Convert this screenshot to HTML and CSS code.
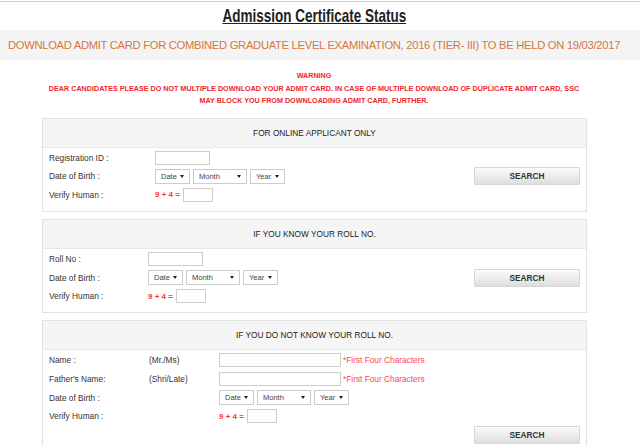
FILE: index.html
```html
<!DOCTYPE html>
<html lang="en">
<head>
    <meta charset="UTF-8">
    <meta name="viewport" content="width=device-width, initial-scale=1.0">
    <title>Admission Certificate Status</title>
    <link rel="stylesheet" href="styles.css">
</head>
<body>
    <div class="topline"></div>
    <div class="page">
        <h1 class="title"><span>Admission Certificate Status</span></h1>
    </div>

    <div class="banner">
        <p>DOWNLOAD ADMIT CARD FOR COMBINED GRADUATE LEVEL EXAMINATION, 2016 (TIER- III) TO BE HELD ON 19/03/2017</p>
    </div>

    <div class="page">
        <div class="warning">
            WARNING<br>
            DEAR CANDIDATES PLEASE DO NOT MULTIPLE DOWNLOAD YOUR ADMIT CARD. IN CASE OF MULTIPLE DOWNLOAD OF DUPLICATE ADMIT CARD, SSC<br>
            MAY BLOCK YOU FROM DOWNLOADING ADMIT CARD, FURTHER.
        </div>

        <!-- online applicant -->
        <div class="panel">
            <div class="panel-head">FOR ONLINE APPLICANT ONLY</div>
            <form class="panel-body form-online">
                <label>Registration ID :</label>
                <div class="field"><input type="text" class="txt reg"></div>
                <label>Date of Birth :</label>
                <div class="field">
                    <select class="sel date"><option>Date</option></select>
                    <select class="sel month"><option>Month</option></select>
                    <select class="sel year"><option>Year</option></select>
                </div>
                <label>Verify Human :</label>
                <div class="field"><span class="captcha">9 + 4 =</span><input type="text" class="txt verify"></div>
                <button type="button" class="search">SEARCH</button>
            </form>
        </div>

        <!-- roll no known -->
        <div class="panel">
            <div class="panel-head">IF YOU KNOW YOUR ROLL NO.</div>
            <form class="panel-body form-roll">
                <label>Roll No :</label>
                <div class="field"><input type="text" class="txt reg"></div>
                <label>Date of Birth :</label>
                <div class="field">
                    <select class="sel date"><option>Date</option></select>
                    <select class="sel month"><option>Month</option></select>
                    <select class="sel year"><option>Year</option></select>
                </div>
                <label>Verify Human :</label>
                <div class="field"><span class="captcha">9 + 4 =</span><input type="text" class="txt verify"></div>
                <button type="button" class="search">SEARCH</button>
            </form>
        </div>

        <!-- roll no unknown -->
        <div class="panel">
            <div class="panel-head">IF YOU DO NOT KNOW YOUR ROLL NO.</div>
            <form class="panel-body form-name">
                <label>Name :</label>
                <span class="prefix">(Mr./Ms)</span>
                <div class="field"><input type="text" class="txt name"><span class="hint">*First Four Characters</span></div>
                <label>Father's Name:</label>
                <span class="prefix">(Shri/Late)</span>
                <div class="field"><input type="text" class="txt name"><span class="hint">*First Four Characters</span></div>
                <label>Date of Birth :</label>
                <span></span>
                <div class="field">
                    <select class="sel date"><option>Date</option></select>
                    <select class="sel month"><option>Month</option></select>
                    <select class="sel year"><option>Year</option></select>
                </div>
                <label>Verify Human :</label>
                <span></span>
                <div class="field"><span class="captcha">9 + 4 =</span><input type="text" class="txt verify"></div>
                <button type="button" class="search">SEARCH</button>
            </form>
        </div>
    </div>
</body>
</html>
```

FILE: styles.css
```css
body {
    margin: 0;
    font-family: "Liberation Sans", Arial, sans-serif;
    color: #333;
    background: #fff;
}
.topline {
    height: 1px;
    margin-top: 1px;
    background: #ccc;
}
.page {
    width: 628px;
}
.title {
    margin: 0;
    padding-top: 3px;
    height: 25px;
    text-align: center;
    font-size: 19px;
    line-height: 22px;
    font-weight: bold;
    color: #222;
}
.title span {
    display: inline-block;
    text-decoration: underline;
    text-decoration-thickness: 1px;
    transform: scaleX(0.71);
}
.banner {
    background: #f4f4f4;
    height: 30px;
}
.banner p {
    margin: 0;
    width: 628px;
    text-align: center;
    white-space: nowrap;
    line-height: 30px;
    font-size: 11.2px;
    letter-spacing: -0.28px;
    color: #d4773e;
}
.warning {
    padding: 10px 0 10px;
    text-align: center;
    font-size: 7.2px;
    line-height: 12.5px;
    font-weight: bold;
    color: #f2242c;
}
.panel {
    margin: 0 0 7px 42px;
    width: 543px;
    border: 1px solid #e3e3e3;
}
.panel-head {
    height: 28px;
    line-height: 28px;
    background: #f5f5f5;
    border-bottom: 1px solid #e8e8e8;
    text-align: center;
    font-size: 8.3px;
    color: #222;
}
.panel-body {
    display: grid;
    grid-auto-rows: 18.6px;
    align-items: center;
    padding: 1px 6px 6.5px;
    margin: 0;
    font-size: 8.3px;
}
.form-online {
    grid-template-columns: 106px 1fr 106px;
}
.form-roll {
    grid-template-columns: 99px 1fr 106px;
}
.form-name {
    grid-template-columns: 100px 70px 1fr 106px;
}
.panel-body label {
    grid-column: 1;
    color: #333;
}
.form-online .field,
.form-roll .field {
    grid-column: 2;
}
.form-name .prefix {
    grid-column: 2;
}
.form-name .field {
    grid-column: 3;
}
.field {
    display: flex;
    align-items: center;
    gap: 3px;
}
.txt {
    box-sizing: border-box;
    height: 14px;
    margin: 0;
    padding: 0 3px;
    border: 1px solid #ccc;
    background: #fff;
}
.txt.reg {
    width: 55px;
}
.txt.verify {
    width: 30px;
}
.txt.name {
    width: 122px;
}
.sel {
    box-sizing: border-box;
    -webkit-appearance: none;
    appearance: none;
    height: 15px;
    margin: 0;
    padding: 0 0 0 5px;
    border: 1px solid #ccc;
    border-radius: 0;
    background: #fff url("data:image/svg+xml,%3Csvg xmlns='http://www.w3.org/2000/svg' width='4' height='3'%3E%3Cpath d='M0 0h4L2 3z' fill='%23222'/%3E%3C/svg%3E") no-repeat right 5px center;
    font-family: inherit;
    font-size: 7.5px;
    color: #444;
}
.sel.date,
.sel.year {
    width: 35px;
}
.sel.month {
    width: 54px;
}
.captcha {
    color: #f33;
    font-weight: bold;
    font-size: 8px;
}
.prefix {
    color: #333;
}
.hint {
    margin-left: -1px;
    color: #f45;
}
.search {
    height: 18px;
    margin: 0;
    padding: 0;
    border: 1px solid #d6d6d6;
    border-radius: 1px;
    background: linear-gradient(#fbfbfb, #dedede);
    font-family: inherit;
    font-size: 8.3px;
    font-weight: bold;
    color: #333;
}
.form-online .search,
.form-roll .search {
    grid-column: 3;
    grid-row: 2;
}
.form-name .search {
    grid-column: 4;
    grid-row: 5;
}
```
